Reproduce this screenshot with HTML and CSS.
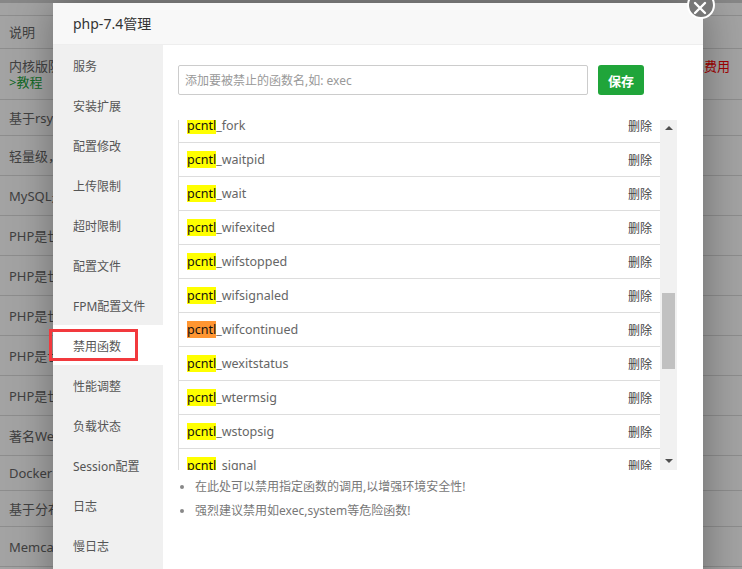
FILE: index.html
```html
<!DOCTYPE html>
<html lang="zh-CN">
<head>
<meta charset="utf-8">
<title>php-7.4管理</title>
<link rel="stylesheet" href="styles.css">
</head>
<body>
<div class="page">
  <div class="topstrip"></div>
  <div class="bg-table">
    <div class="bg-row h34"><span class="c1">说明</span></div>
    <div class="bg-row h51 two"><span class="c1">内核版防御<br><a class="green">&gt;教程</a></span><span class="c2 red">免费用</span></div>
    <div class="bg-row h36"><span class="c1">基于rsync</span></div>
    <div class="bg-row h40"><span class="c1">轻量级，</span></div>
    <div class="bg-row h40"><span class="c1">MySQL是</span></div>
    <div class="bg-row h40"><span class="c1">PHP是世界</span></div>
    <div class="bg-row h40"><span class="c1">PHP是世界</span></div>
    <div class="bg-row h40"><span class="c1">PHP是世界</span></div>
    <div class="bg-row h40"><span class="c1">PHP是世界</span></div>
    <div class="bg-row h40"><span class="c1">PHP是世界</span></div>
    <div class="bg-row h40"><span class="c1">著名Web</span></div>
    <div class="bg-row h35"><span class="c1">Docker 是</span></div>
    <div class="bg-row h36"><span class="c1">基于分布式</span></div>
    <div class="bg-row h40"><span class="c1">Memcached</span></div>
  </div>
  <div class="mask"></div>

  <div class="modal">
    <div class="modal-head">php-7.4管理</div>
    <a class="modal-close" aria-label="关闭">
      <svg width="14" height="14" viewBox="0 0 14 14"><path d="M2 2 L12 12 M12 2 L2 12" stroke="#fff" stroke-width="2.4" stroke-linecap="round" fill="none"/></svg>
    </a>
    <div class="modal-body">
      <ul class="side">
        <li>服务</li>
        <li>安装扩展</li>
        <li>配置修改</li>
        <li>上传限制</li>
        <li>超时限制</li>
        <li>配置文件</li>
        <li>FPM配置文件</li>
        <li class="active">禁用函数<span class="mark"></span></li>
        <li>性能调整</li>
        <li>负载状态</li>
        <li>Session配置</li>
        <li>日志</li>
        <li>慢日志</li>
      </ul>
      <div class="content">
        <div class="add-bar">
          <input class="add-input" type="text" placeholder="添加要被禁止的函数名,如: exec">
          <button class="btn-save">保存</button>
        </div>
        <div class="list-box">
          <div class="list-view">
            <div class="list">
              <div class="row"><span class="fn"><span class="hl">pcntl</span>_fork</span><a class="del">删除</a></div>
              <div class="row"><span class="fn"><span class="hl">pcntl</span>_waitpid</span><a class="del">删除</a></div>
              <div class="row"><span class="fn"><span class="hl">pcntl</span>_wait</span><a class="del">删除</a></div>
              <div class="row"><span class="fn"><span class="hl">pcntl</span>_wifexited</span><a class="del">删除</a></div>
              <div class="row"><span class="fn"><span class="hl">pcntl</span>_wifstopped</span><a class="del">删除</a></div>
              <div class="row"><span class="fn"><span class="hl">pcntl</span>_wifsignaled</span><a class="del">删除</a></div>
              <div class="row"><span class="fn"><span class="hl cur">pcntl</span>_wifcontinued</span><a class="del">删除</a></div>
              <div class="row"><span class="fn"><span class="hl">pcntl</span>_wexitstatus</span><a class="del">删除</a></div>
              <div class="row"><span class="fn"><span class="hl">pcntl</span>_wtermsig</span><a class="del">删除</a></div>
              <div class="row"><span class="fn"><span class="hl">pcntl</span>_wstopsig</span><a class="del">删除</a></div>
              <div class="row"><span class="fn"><span class="hl">pcntl</span>_signal</span><a class="del">删除</a></div>
              <div class="row"><span class="fn"><span class="hl">pcntl</span>_signal_dispatch</span><a class="del">删除</a></div>
            </div>
          </div>
          <div class="sbar">
            <span class="sb-up"></span>
            <div class="sb-track"><div class="sb-thumb"></div></div>
            <span class="sb-down"></span>
          </div>
        </div>
        <ul class="notes">
          <li>在此处可以禁用指定函数的调用,以增强环境安全性!</li>
          <li>强烈建议禁用如exec,system等危险函数!</li>
        </ul>
      </div>
    </div>
  </div>
</div>
</body>
</html>
```

FILE: styles.css
```css
* { box-sizing: border-box; }
html, body { margin: 0; padding: 0; }
body {
  width: 742px;
  height: 569px;
  overflow: hidden;
  background: #fff;
  font-family: "Noto Sans", "Noto Sans CJK SC", sans-serif;
  font-size: 12px;
  color: #666;
}
.page {
  position: relative;
  width: 742px;
  height: 569px;
  overflow: hidden;
}
.topstrip {
  height: 3px;
  background: #d4d4d4;
}
.bg-table {
  margin-top: 12px;
  border-top: 1px solid #ddd;
}
.bg-row {
  display: flex;
  align-items: center;
  border-bottom: 1px solid #ddd;
  position: relative;
  white-space: nowrap;
}
.bg-row.h34 { height: 33px; }
.bg-row.h51 { height: 51px; }
.bg-row.h36 { height: 36px; }
.bg-row.h35 { height: 35px; }
.bg-row.h40 { height: 40px; }
.bg-row .c1 {
  padding-left: 9px;
  width: 300px;
  line-height: 16px;
  font-size: 13px;
}
.bg-row .c2 {
  margin-left: 391px;
  font-size: 13px;
  line-height: 16px;
  margin-top: -16px;
}
.green { color: #20a53a; }
.red { color: #f00; }

.mask {
  position: absolute;
  inset: 0;
  background: rgba(0, 0, 0, 0.36);
}

.modal {
  position: absolute;
  left: 53px;
  top: 3px;
  width: 650px;
  height: 600px;
  background: #fff;
  box-shadow: 1px 1px 40px rgba(0, 0, 0, 0.35);
}
.modal-head {
  height: 42px;
  line-height: 41px;
  padding-left: 20px;
  background: #f8f8f8;
  border-bottom: 1px solid #eee;
  font-size: 14px;
  color: #333;
}
.modal-close {
  position: absolute;
  right: -12px;
  top: -12px;
  width: 28px;
  height: 28px;
  border-radius: 50%;
  background: #777;
  border: 2px solid #fff;
  display: flex;
  align-items: center;
  justify-content: center;
}
.modal-close svg { margin-top: 6px; margin-left: -2px; }

.modal-body {
  display: flex;
  height: 560px;
}
.side {
  list-style: none;
  margin: 0;
  padding: 0;
  width: 110px;
  background: #f0f0f0;
}
.side li {
  height: 40px;
  line-height: 20px;
  padding-top: 12px;
  padding-left: 20px;
  color: #555;
  font-size: 12px;
  position: relative;
}
.side li.active {
  background: #fff;
}
.side .mark {
  position: absolute;
  left: -4px;
  top: 4px;
  width: 89px;
  height: 32px;
  border: 3px solid #f2393d;
}

.content {
  flex: 1;
  padding: 20px 26px 0 15px;
}
.add-bar {
  display: flex;
  align-items: center;
}
.add-input {
  width: 410px;
  height: 30px;
  border: 1px solid #ccc;
  border-radius: 2px;
  padding: 0 6px;
  font-family: inherit;
  font-size: 12px;
  color: #555;
  outline: none;
}
.add-input::placeholder { color: #999; }
.btn-save {
  margin-left: 10px;
  width: 46px;
  height: 30px;
  border: 0;
  border-radius: 3px;
  background: #20a53a;
  color: #fff;
  font-family: inherit;
  font-size: 13px;
  font-weight: bold;
  padding: 0;
}

.list-box {
  margin-top: 25px;
  height: 350px;
  display: flex;
}
.list-view {
  flex: 1;
  overflow: hidden;
  border-left: 1px solid #ddd;
}
.list {
  margin-top: -11px;
}
.row {
  height: 34px;
  border-bottom: 1px solid #ddd;
  display: flex;
  align-items: center;
  justify-content: space-between;
  padding: 0 8px;
}
.fn {
  font-size: 12.5px;
  color: #666;
}
.hl {
  background: #ffff00;
  color: #111;
}
.hl.cur { background: #ff9632; }
.del {
  font-size: 12px;
  color: #444;
}

.sbar {
  width: 17px;
  background: #f1f1f1;
  display: flex;
  flex-direction: column;
  align-items: center;
}
.sb-up, .sb-down {
  width: 0;
  height: 0;
  border-left: 4px solid transparent;
  border-right: 4px solid transparent;
  flex: none;
}
.sb-up {
  border-bottom: 4px solid #505050;
  margin-top: 6px;
}
.sb-down {
  border-top: 4px solid #505050;
  margin-bottom: 7px;
}
.sb-track {
  flex: 1;
  width: 13px;
  padding-top: 163px;
}
.sb-thumb {
  height: 76px;
  background: #c1c1c1;
}

.notes {
  margin: 5px 0 0;
  padding-left: 17px;
  color: #777;
  font-size: 12px;
}
.notes li {
  line-height: 24px;
}
.notes li::marker { color: #888; }
```
